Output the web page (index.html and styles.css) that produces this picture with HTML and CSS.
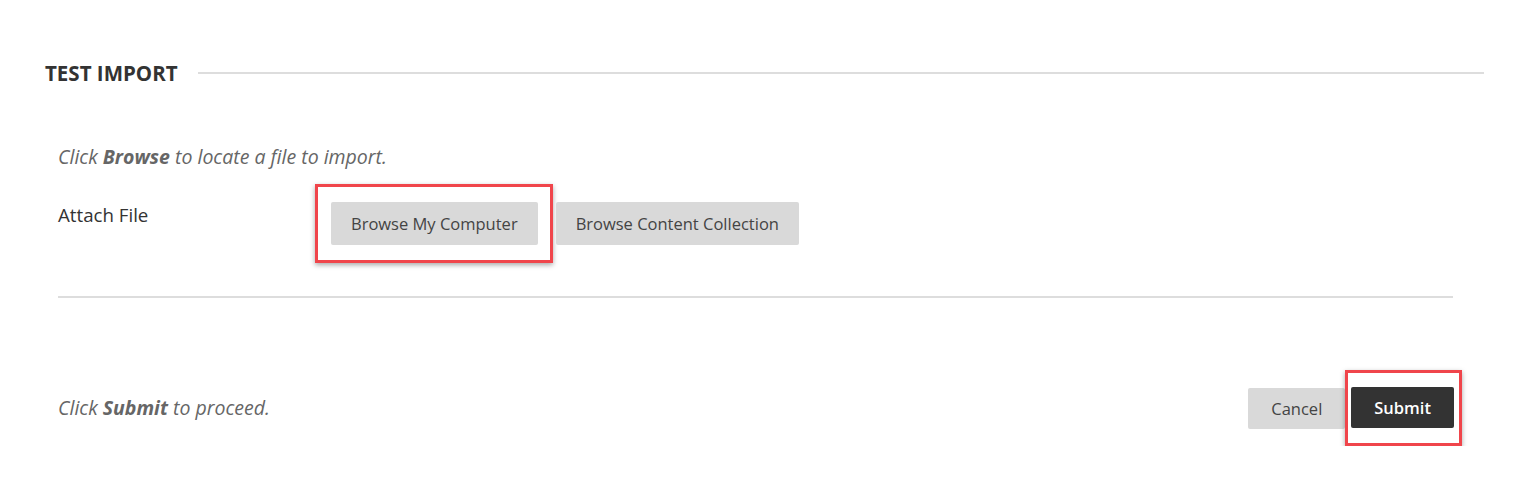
FILE: index.html
```html
<!DOCTYPE html>
<html lang="en">
<head>
    <meta charset="UTF-8">
    <meta name="viewport" content="width=device-width, initial-scale=1.0">
    <title>Test Import</title>
    <link rel="stylesheet" href="styles.css">
</head>
<body>

<div class="page">
    <div class="section-head">
        <h2>TEST IMPORT</h2>
        <div class="head-line"></div>
    </div>

    <div class="content">
        <p class="hint">Click <b>Browse</b> to locate a file to import.</p>

        <div class="field-row">
            <label class="field-label">Attach File</label>
            <div class="field-buttons">
                <span class="highlight hl-browse">
                    <button class="btn btn-browse">Browse My Computer</button>
                </span>
                <button class="btn btn-browse">Browse Content Collection</button>
            </div>
        </div>

        <hr class="divider">

        <div class="submit-row">
            <p class="hint">Click <b>Submit</b> to proceed.</p>
            <div class="submit-buttons">
                <button class="btn btn-cancel">Cancel</button>
                <span class="highlight hl-submit">
                    <button class="btn btn-submit">Submit</button>
                </span>
            </div>
        </div>
    </div>
</div>

</body>
</html>
```

FILE: styles.css
```css
body {
    font-family: "Open Sans", Arial, sans-serif;
    margin: 0;
    background: #fff;
    color: #333;
}
.page {
    padding: 50px 43px 0 45px;
}
.section-head {
    display: flex;
    align-items: center;
    gap: 20px;
}
.section-head h2 {
    margin: 0;
    font-size: 20.5px;
    font-weight: 700;
    color: #333;
    line-height: 46px;
}
.head-line {
    flex: 1;
    height: 2px;
    background: #ddd;
}
.content {
    margin: 0 32px 0 13px;
}
.hint {
    margin: 0;
    font-size: 19.5px;
    line-height: 26px;
    font-style: italic;
    color: #666;
}
.hint b {
    font-weight: 700;
}
.content > .hint {
    margin-top: 48px;
}
.field-row {
    display: flex;
    align-items: flex-start;
    margin-top: 14px;
}
.field-label {
    width: 257px;
    font-size: 18.7px;
    line-height: 26px;
    color: #333;
    margin-top: 18px;
}
.field-buttons {
    display: flex;
    align-items: center;
    gap: 3px;
}
.btn {
    font-family: "Open Sans", Arial, sans-serif;
    font-size: 16.5px;
    color: #444;
    background: #d9d9d9;
    border: none;
    border-radius: 2px;
    cursor: pointer;
}
.btn-browse {
    height: 43px;
    padding: 0 20px;
}
.highlight {
    display: inline-flex;
    border: 3px solid #f0454b;
    box-shadow: 0 2px 5px rgba(0, 0, 0, 0.35);
}
.hl-browse {
    padding: 15px 12px 15px 13px;
}
.divider {
    border: none;
    height: 2px;
    background: #ddd;
    margin: 33px -1px 0 0;
}
.submit-row {
    display: flex;
    align-items: center;
    justify-content: space-between;
    margin: 72px -10px 0 0;
}
.submit-buttons {
    display: flex;
    align-items: center;
}
.btn-cancel {
    height: 41px;
    padding: 0 23px;
}
.btn-submit {
    height: 41px;
    padding: 0 23px;
    background: #333;
    color: #fff;
    font-weight: 600;
}
.hl-submit {
    padding: 14px 5px 15px 3px;
}
```
